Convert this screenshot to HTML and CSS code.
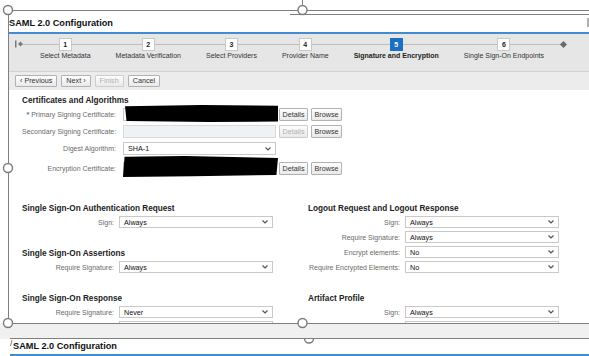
FILE: index.html
```html
<!DOCTYPE html>
<html lang="en">
<head>
  <meta charset="UTF-8" />
  <title>SAML 2.0 Configuration</title>
  <link rel="stylesheet" href="styles.css">
</head>
<body>
  <div class="doc">
    <div class="shot">
      <div class="shot-title">SAML 2.0 Configuration</div>

      <!-- Шаги мастера -->
      <div class="roadmap">
        <svg class="rm-start" width="8" height="8" viewBox="0 0 8 8"><rect x="0" y="0.5" width="1.5" height="7" fill="#7a7a7a"/><polygon points="3,4 5.5,1.5 8,4 5.5,6.5" fill="#7a7a7a"/></svg>
        <div class="steps">
          <div class="step"><span class="num">1</span><span class="lbl">Select Metadata</span></div>
          <div class="step"><span class="num">2</span><span class="lbl">Metadata Verification</span></div>
          <div class="step"><span class="num">3</span><span class="lbl">Select Providers</span></div>
          <div class="step"><span class="num">4</span><span class="lbl">Provider Name</span></div>
          <div class="step on"><span class="num">5</span><span class="lbl">Signature and Encryption</span></div>
          <div class="step"><span class="num">6</span><span class="lbl">Single Sign-On Endpoints</span></div>
        </div>
        <span class="rm-end"></span>
      </div>

      <div class="toolbar">
        <button class="btn">&lsaquo; Previous</button>
        <button class="btn">Next &rsaquo;</button>
        <button class="btn off">Finish</button>
        <button class="btn">Cancel</button>
      </div>

      <div class="content">
        <div class="sec-title">Certificates and Algorithms</div>
        <div class="row">
          <label><span class="req">*</span> Primary Signing Certificate:</label>
          <div class="field"><div class="input"></div><span class="redact r1"></span></div>
          <button class="btn small">Details</button>
          <button class="btn small">Browse</button>
        </div>
        <div class="row">
          <label>Secondary Signing Certificate:</label>
          <div class="field"><div class="input dis"></div></div>
          <button class="btn small off">Details</button>
          <button class="btn small">Browse</button>
        </div>
        <div class="row">
          <label>Digest Algorithm:</label>
          <div class="field"><div class="select">SHA-1<svg class="chev" width="6" height="4" viewBox="0 0 6 4"><polyline points="0.5,0.5 3,3 5.5,0.5" fill="none" stroke="#555" stroke-width="1.2"/></svg></div></div>
        </div>
        <div class="row enc">
          <label>Encryption Certificate:</label>
          <div class="field"><div class="input"></div><span class="redact r2"></span></div>
          <button class="btn small">Details</button>
          <button class="btn small">Browse</button>
        </div>

        <div class="cols">
          <div class="col">
            <div class="sec">
              <div class="sec-title">Single Sign-On Authentication Request</div>
              <div class="frow"><label>Sign:</label><div class="select">Always<svg class="chev" width="6" height="4" viewBox="0 0 6 4"><polyline points="0.5,0.5 3,3 5.5,0.5" fill="none" stroke="#555" stroke-width="1.2"/></svg></div></div>
            </div>
            <div class="sec">
              <div class="sec-title">Single Sign-On Assertions</div>
              <div class="frow"><label>Require Signature:</label><div class="select">Always<svg class="chev" width="6" height="4" viewBox="0 0 6 4"><polyline points="0.5,0.5 3,3 5.5,0.5" fill="none" stroke="#555" stroke-width="1.2"/></svg></div></div>
            </div>
            <div class="sec">
              <div class="sec-title">Single Sign-On Response</div>
              <div class="frow"><label>Require Signature:</label><div class="select">Never<svg class="chev" width="6" height="4" viewBox="0 0 6 4"><polyline points="0.5,0.5 3,3 5.5,0.5" fill="none" stroke="#555" stroke-width="1.2"/></svg></div></div>
              <div class="frow"><label></label><div class="select"></div></div>
            </div>
          </div>
          <div class="col">
            <div class="sec">
              <div class="sec-title">Logout Request and Logout Response</div>
              <div class="frow"><label>Sign:</label><div class="select">Always<svg class="chev" width="6" height="4" viewBox="0 0 6 4"><polyline points="0.5,0.5 3,3 5.5,0.5" fill="none" stroke="#555" stroke-width="1.2"/></svg></div></div>
              <div class="frow"><label>Require Signature:</label><div class="select">Always<svg class="chev" width="6" height="4" viewBox="0 0 6 4"><polyline points="0.5,0.5 3,3 5.5,0.5" fill="none" stroke="#555" stroke-width="1.2"/></svg></div></div>
              <div class="frow"><label>Encrypt elements:</label><div class="select">No<svg class="chev" width="6" height="4" viewBox="0 0 6 4"><polyline points="0.5,0.5 3,3 5.5,0.5" fill="none" stroke="#555" stroke-width="1.2"/></svg></div></div>
              <div class="frow"><label>Require Encrypted Elements:</label><div class="select">No<svg class="chev" width="6" height="4" viewBox="0 0 6 4"><polyline points="0.5,0.5 3,3 5.5,0.5" fill="none" stroke="#555" stroke-width="1.2"/></svg></div></div>
            </div>
            <div class="sec">
              <div class="sec-title">Artifact Profile</div>
              <div class="frow"><label>Sign:</label><div class="select">Always<svg class="chev" width="6" height="4" viewBox="0 0 6 4"><polyline points="0.5,0.5 3,3 5.5,0.5" fill="none" stroke="#555" stroke-width="1.2"/></svg></div></div>
              <div class="frow"><label></label><div class="select"></div></div>
            </div>
          </div>
        </div>
      </div>
    </div>

    <div class="gap"></div>

    <div class="shot next">
      <div class="shot-title">SAML 2.0 Configuration</div>
    </div>
  </div>

  <!-- Рамка выделения редактора -->
  <svg class="handles" width="589" height="356" viewBox="0 0 589 356">
    <g stroke="#808080" stroke-width="1" fill="none">
      <line x1="8" y1="10.5" x2="589" y2="10.5"/>
      <line x1="290" y1="14.5" x2="589" y2="14.5"/>
      <line x1="8.5" y1="10" x2="8.5" y2="323"/>
      <line x1="8" y1="323.5" x2="589" y2="323.5"/>
      <line x1="10" y1="338.5" x2="589" y2="338.5"/>
      <line x1="302.5" y1="0" x2="302.5" y2="6"/>
      <line x1="10.5" y1="346" x2="12" y2="340"/>
    </g>
    <g fill="#fff" stroke="#7a7a7a" stroke-width="1.4">
      <circle cx="8" cy="10" r="4.5"/>
      <circle cx="302.5" cy="10" r="4.5"/>
      <circle cx="8" cy="168" r="4.5"/>
      <circle cx="8" cy="323" r="4.5"/>
      <circle cx="302.5" cy="323" r="4.5"/>
      <path d="M304.5,338.5 A4.5,4.5 0 0 0 313.5,338.5" fill="none"/>
    </g>
    <rect x="587" y="18" width="2" height="9" fill="#b0b0b0"/>
  </svg>
</body>
</html>
```

FILE: styles.css
```css
/* Общие стили */
* { box-sizing: border-box; }
body { margin: 0; width: 589px; height: 356px; overflow: hidden; position: relative; background: #fff; font-family: "Liberation Sans", Arial, sans-serif; color: #333; }
.doc { padding-top: 15px; }
.shot { margin-left: 9px; height: 308px; overflow: hidden; background: #fff; }
.shot-title { height: 19px; line-height: 17px; font-size: 9.2px; font-weight: bold; color: #111; border-bottom: 2px solid #3d8dd0; white-space: nowrap; }

/* Шаги */
.roadmap { height: 38px; display: flex; align-items: flex-start; padding: 4px 0 0 6px; border-bottom: 1px solid #d2d2d2;
  background: linear-gradient(#bdbdbd, #bdbdbd) 14px 10px / 539px 1px no-repeat, #e6e6e6; }
.rm-start { margin: 2px 17px 0 0; flex: none; }
.steps { display: flex; gap: 25px; }
.step { display: flex; flex-direction: column; align-items: center; }
.step .num { width: 13px; height: 13px; background: #fff; border: 1px solid #c8c8c8; font-size: 7px; font-weight: bold; line-height: 11px; text-align: center; color: #222; }
.step .lbl { font-size: 7px; line-height: 9px; color: #333; white-space: nowrap; }
.step.on .num { background: #1b70c4; border-color: #1b70c4; color: #fff; }
.step.on .lbl { font-weight: bold; color: #222; }
.rm-end { width: 5px; height: 5px; margin: 4px 0 0 17px; background: #6a6a6a; transform: rotate(45deg); flex: none; }

/* Панель кнопок */
.toolbar { height: 18px; display: flex; gap: 4px; padding: 3px 0 0 6px; background: #ececec; }
.btn { height: 12px; padding: 0 4px; font-family: "Liberation Sans", Arial, sans-serif; font-size: 7.2px; line-height: 10px; color: #333; border: 1px solid #b2b2b2; border-radius: 1px; background: linear-gradient(#fdfdfd, #e9e9e9); white-space: nowrap; }
.btn.off { color: #b0b0b0; border-color: #cdcdcd; }
.btn.small { height: 13px; width: 29px; padding: 0; margin-left: 3px; }
.btn.small + .btn.small { width: 31px; }

/* Форма */
.content { padding: 6px 0 0 13px; }
.sec-title { font-size: 8.2px; line-height: 10px; font-weight: bold; color: #222; white-space: nowrap; }
.row { display: flex; align-items: center; height: 13px; margin-top: 4px; }
.sec-title + .row { margin-top: 2px; }
.row.enc { margin-top: 7px; }
label { flex: none; font-size: 7px; color: #6a6a6a; text-align: right; white-space: nowrap; }
.row label { width: 94px; }
.req { color: #2a7dc6; font-weight: bold; }
.field { position: relative; width: 153px; height: 13px; margin-left: 7px; flex: none; }
.input { height: 100%; border: 1px solid #c9c9c9; background: #fff; }
.input.dis { background: #eef2f5; border-color: #d6dadd; }
.redact { position: absolute; background: #000; }
.redact.r1 { left: 2px; top: -3px; width: 153px; height: 17px; clip-path: polygon(0 8%, 50% 0, 100% 4%, 100% 97%, 55% 100%, 1% 94%); }
.redact.r2 { left: 0; top: -6px; width: 155px; height: 21px; clip-path: polygon(1% 4%, 40% 0, 100% 10%, 99% 90%, 45% 96%, 0 100%); }
.select { display: flex; align-items: center; height: 100%; padding: 0 4px; border: 1px solid #c9c9c9; background: #fff; font-size: 7.2px; color: #111; }
.select .chev { margin-left: auto; }

/* Колонки */
.cols { display: grid; grid-template-columns: 286px 286px; margin-top: 29px; }
.sec + .sec { margin-top: 21px; }
.frow { display: flex; align-items: center; height: 12px; margin-top: 3px; }
.sec-title + .frow { margin-top: 2px; }
.frow label { width: 92px; }
.frow .select { width: 154px; margin-left: 5px; flex: none; }

/* Нижний фрагмент */
.gap { height: 16px; background: #f0f0f0; }
.shot.next { margin-left: 10px; height: auto; }
.shot.next .shot-title { height: 17px; line-height: 15px; padding-left: 3px; }

.handles { position: absolute; left: 0; top: 0; pointer-events: none; }
```
